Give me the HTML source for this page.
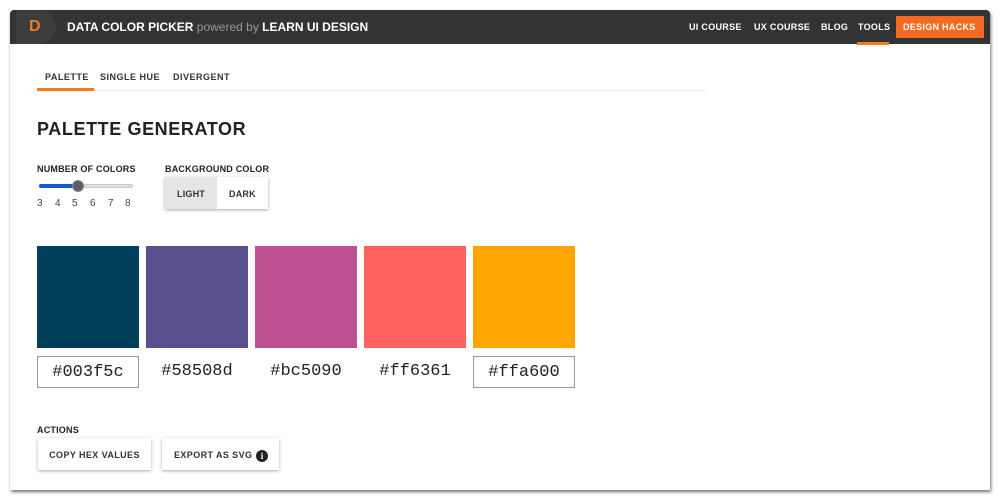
<!DOCTYPE html>
<html><head><style>
*{margin:0;padding:0;box-sizing:border-box}
body{width:1000px;height:500px;background:#fff;position:relative;overflow:hidden;font-family:"Liberation Sans",sans-serif;color:#222}
.a{position:absolute}
.page{left:10px;top:10px;width:980px;height:480px;background:#fff;box-shadow:1px 2px 3px rgba(0,0,0,.55);border-radius:4px 4px 0 0}
.hdr{left:10px;top:10px;width:980px;height:34px;background:#333;border-radius:4px 4px 0 0}
.logo{left:16px;top:10px;width:40px;height:34px;background:#3d3d3d;border-radius:0 17px 17px 0}
.nav{font-weight:bold;font-size:9px;color:#fff;letter-spacing:.3px;top:22px;white-space:nowrap}
.tab{font-size:9px;font-weight:bold;letter-spacing:.5px;color:#333;top:72px}
.lbl{font-size:9px;font-weight:bold;letter-spacing:.2px;color:#222;white-space:nowrap}
.sw{width:102px;height:102px;top:246px}
.hex{font-family:"Liberation Mono",monospace;font-size:17px;top:356px;width:102px;height:32px;line-height:31px;text-align:center;color:#222}
.btn{top:438px;height:32px;background:#fff;box-shadow:0 1px 3px rgba(0,0,0,.35);font-size:9px;font-weight:bold;letter-spacing:.4px;line-height:35px;text-align:center;color:#333;white-space:nowrap}
.d{top:198px;font-size:10px;color:#444}
</style></head><body>
<div class="a page"></div>
<div class="a hdr"></div>
<div class="a logo"></div>
<div class="a" style="left:29px;top:18px;font-weight:bold;font-size:16px;color:#f47a20">D</div>
<div class="a" style="left:67px;top:20px;font-weight:bold;font-size:12px;color:#fff;white-space:nowrap">DATA COLOR PICKER <span style="font-weight:normal;color:#999;font-size:12px">powered by</span> LEARN UI DESIGN</div>
<div class="a nav" style="left:689px">UI COURSE</div>
<div class="a nav" style="left:754px">UX COURSE</div>
<div class="a nav" style="left:821px">BLOG</div>
<div class="a nav" style="left:858px">TOOLS</div>
<div class="a" style="left:857px;top:42px;width:32px;height:3px;background:#f47a20"></div>
<div class="a" style="left:896px;top:16px;width:88px;height:22px;background:#f26a21"></div>
<div class="a nav" style="left:903px;color:#fff">DESIGN HACKS</div>
<div class="a tab" style="left:45px">PALETTE</div>
<div class="a tab" style="left:100px">SINGLE HUE</div>
<div class="a tab" style="left:173px">DIVERGENT</div>
<div class="a" style="left:37px;top:90px;width:670px;height:1px;background:#eee"></div>
<div class="a" style="left:37px;top:88px;width:57px;height:3px;background:#f47a20"></div>
<div class="a" style="left:37px;top:119px;font-size:18px;font-weight:bold;letter-spacing:.6px;color:#222">PALETTE GENERATOR</div>
<div class="a lbl" style="left:37px;top:164px">NUMBER OF COLORS</div>
<div class="a" style="left:39px;top:184px;width:94px;height:4px;background:#ddd;border-radius:2px;border:1px solid #ccc"></div>
<div class="a" style="left:39px;top:184px;width:40px;height:4px;background:#1a56d6;border-radius:2px"></div>
<div class="a" style="left:72px;top:180px;width:12px;height:12px;background:#5a5e6a;border-radius:50%;border:1px solid #888"></div>
<div class="a d" style="left:37px">3</div><div class="a d" style="left:55px">4</div><div class="a d" style="left:72px">5</div><div class="a d" style="left:90px">6</div><div class="a d" style="left:108px">7</div><div class="a d" style="left:125px">8</div>
<div class="a lbl" style="left:165px;top:164px">BACKGROUND COLOR</div>
<div class="a" style="left:165px;top:177px;width:103px;height:32px;background:#fff;box-shadow:0 1px 3px rgba(0,0,0,.35)"></div>
<div class="a" style="left:165px;top:177px;width:52px;height:32px;background:#e6e6e6"></div>
<div class="a lbl" style="left:177px;top:189px;color:#333">LIGHT</div>
<div class="a lbl" style="left:229px;top:189px;color:#333">DARK</div>
<div class="a sw" style="left:37px;background:#003f5c"></div>
<div class="a sw" style="left:146px;background:#58508d"></div>
<div class="a sw" style="left:255px;background:#bc5090"></div>
<div class="a sw" style="left:364px;background:#ff6361"></div>
<div class="a sw" style="left:473px;background:#ffa600"></div>
<div class="a hex" style="left:37px;border:1px solid #999">#003f5c</div>
<div class="a hex" style="left:146px">#58508d</div>
<div class="a hex" style="left:255px">#bc5090</div>
<div class="a hex" style="left:364px">#ff6361</div>
<div class="a hex" style="left:473px;border:1px solid #999">#ffa600</div>
<div class="a lbl" style="left:37px;top:425px">ACTIONS</div>
<div class="a btn" style="left:38px;width:113px">COPY HEX VALUES</div>
<div class="a btn" style="left:162px;width:117px;text-align:left;padding-left:12px">EXPORT AS SVG</div>
<div class="a" style="left:256px;top:450px;width:12px;height:12px;border-radius:50%;background:#222;color:#fff;font-size:9px;font-weight:bold;text-align:center;line-height:12px;font-family:'Liberation Serif',serif">i</div>
</body></html>
